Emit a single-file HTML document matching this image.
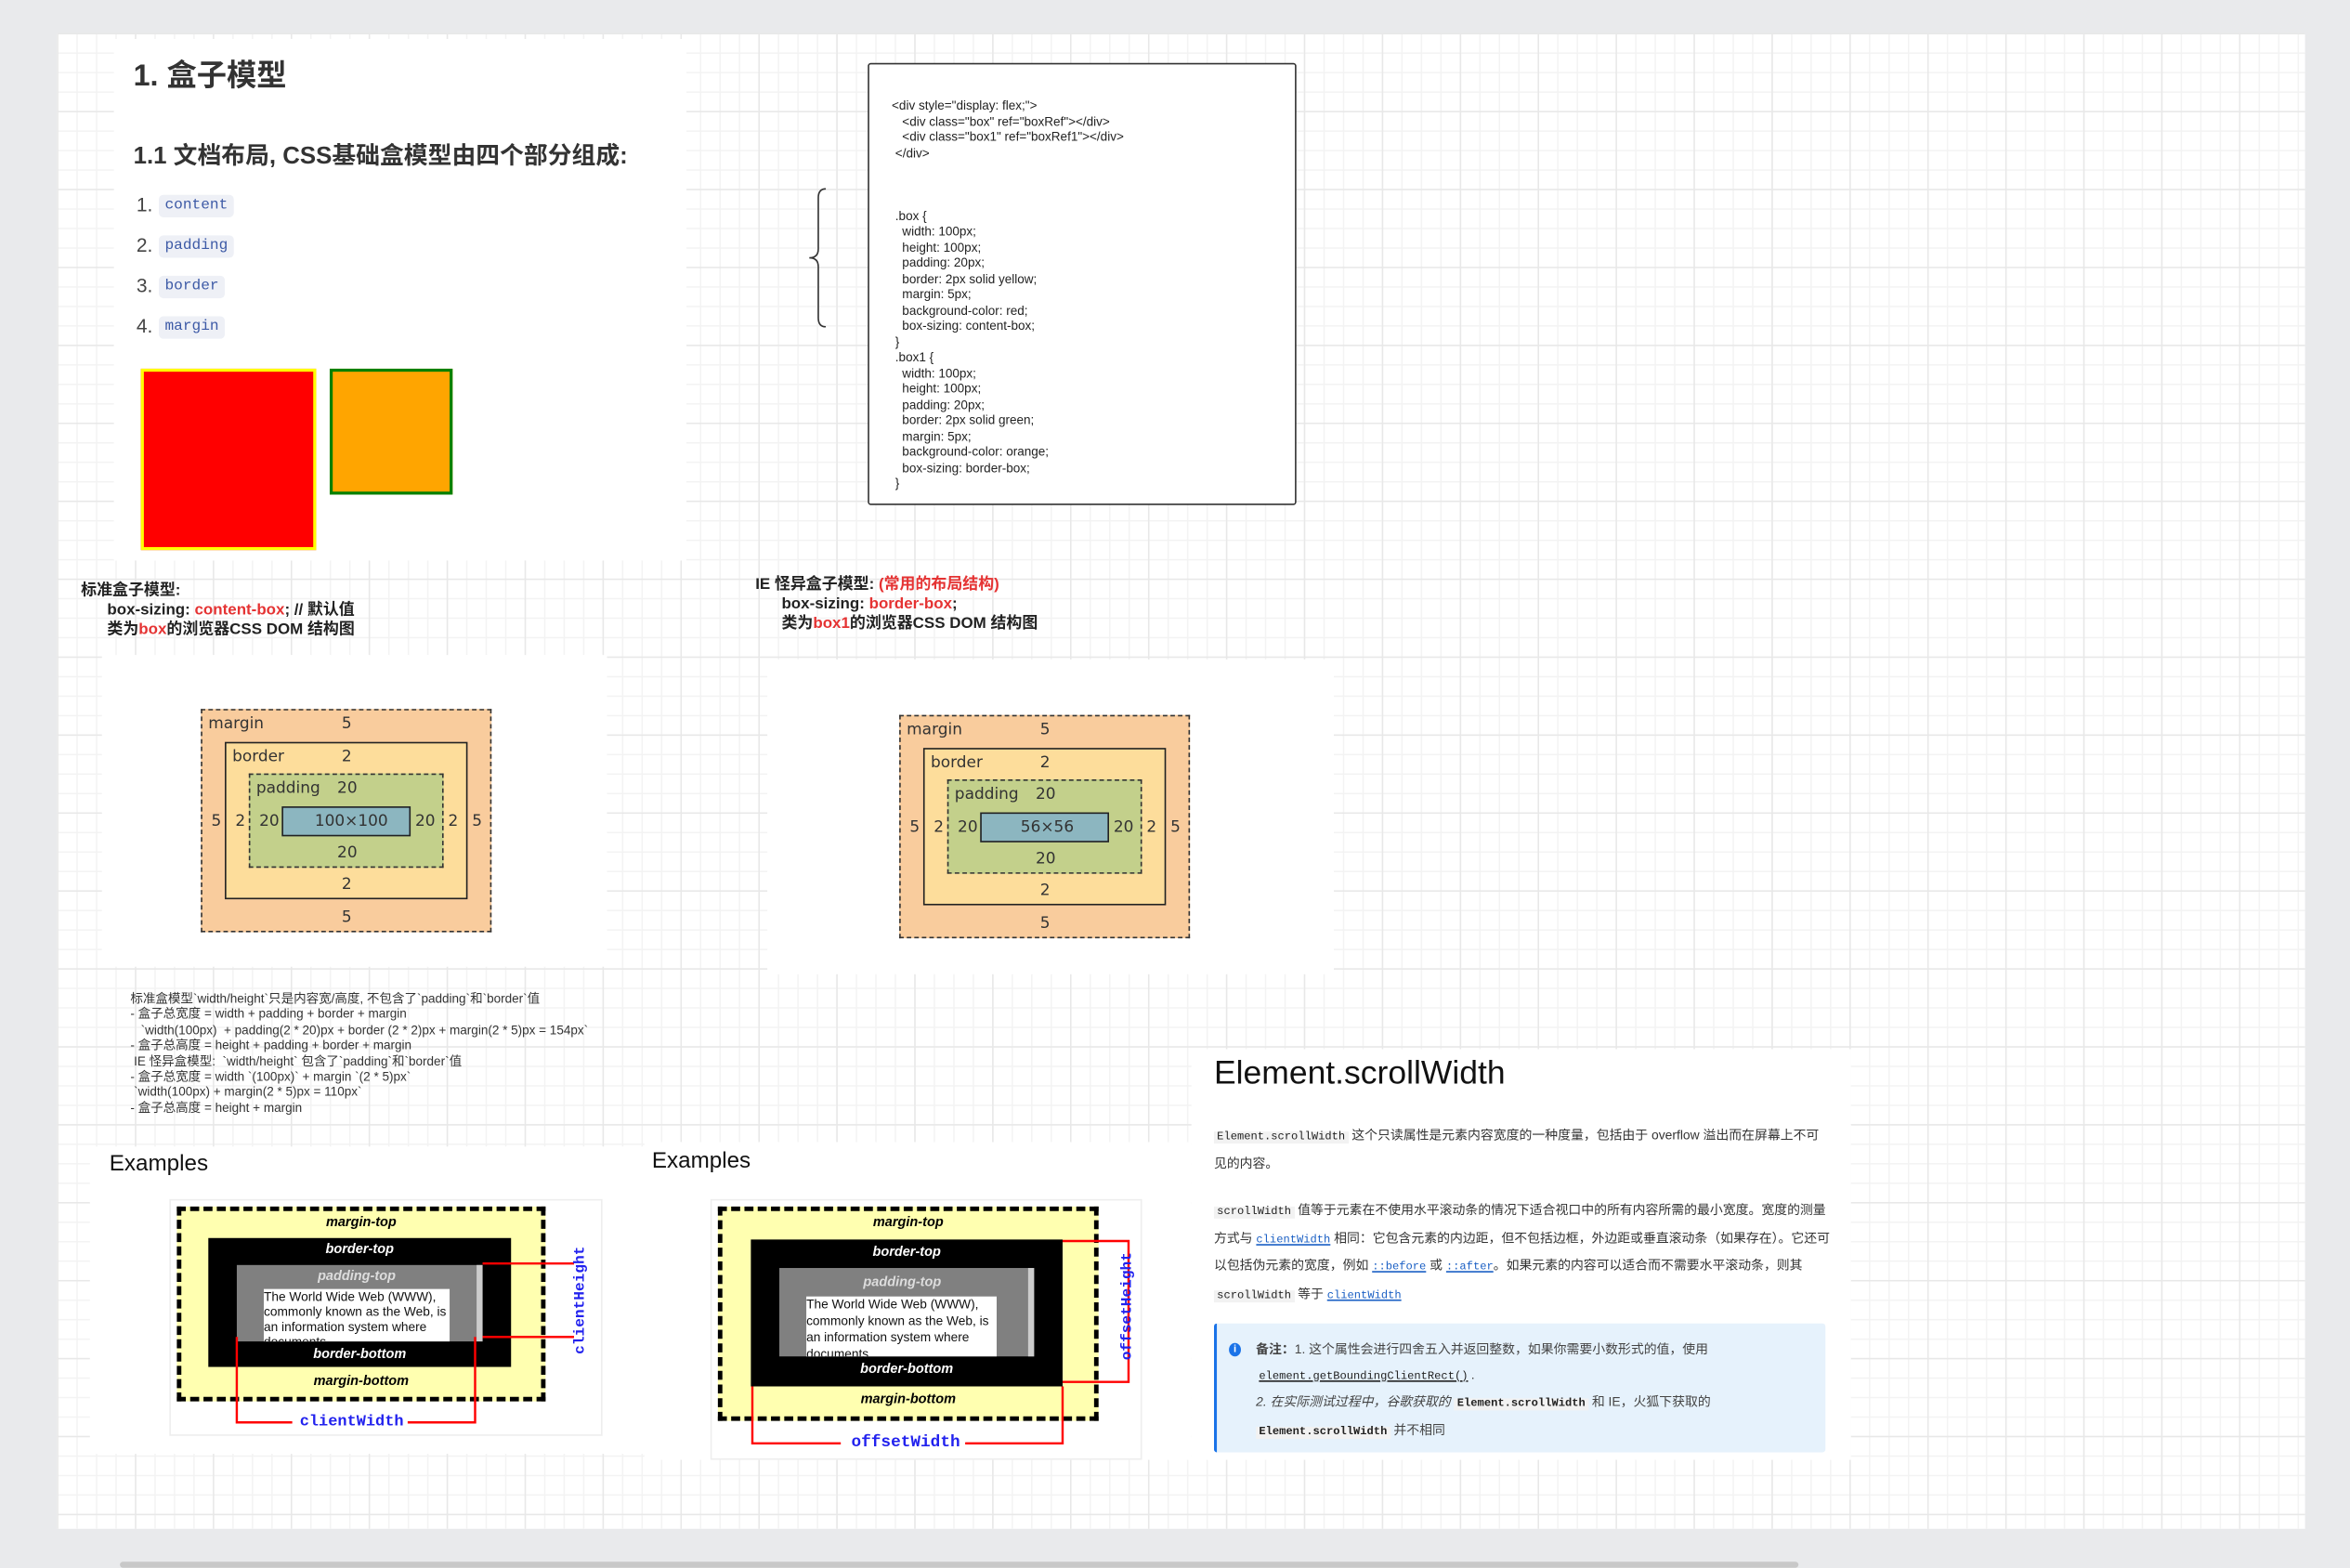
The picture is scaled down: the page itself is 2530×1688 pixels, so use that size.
<!DOCTYPE html>
<html><head><meta charset="utf-8">
<style>
html,body{margin:0;padding:0;}
body{width:2530px;height:1687px;overflow:hidden;background:#e9eaec;font-family:"Liberation Sans","Noto Sans CJK SC",sans-serif;}
#s{position:absolute;left:0;top:0;width:1568px;height:1046px;transform:scale(1.61352);transform-origin:0 0;}
.a{position:absolute;}
.cv{left:38px;top:22px;width:1500px;height:998px;background-color:#fff;
background-image:linear-gradient(#e8e8e8 1px,transparent 1px),linear-gradient(90deg,#e8e8e8 1px,transparent 1px),linear-gradient(#f3f3f3 1px,transparent 1px),linear-gradient(90deg,#f3f3f3 1px,transparent 1px);
background-size:52px 52px,52px 52px,13px 13px,13px 13px;}
.w{background:#fff;}
.code{font-family:"Liberation Mono",monospace;font-size:10px;color:#3d5aa6;background:#eef0f6;border-radius:3px;padding:2px 4px;}
.li{font-size:13px;color:#444;}
.cb{font-size:8.4px;line-height:10.5px;color:#222;white-space:pre;}
.lb{font-size:10.5px;font-weight:bold;color:#222;line-height:13px;white-space:pre;}
.r{color:#e53333;}
.n{font-size:8.4px;line-height:10.4px;color:#333;white-space:pre;}
.d{font-family:"DejaVu Sans","Liberation Sans",sans-serif;font-size:10.5px;color:#333;}
.ex{font-size:15px;color:#111;}
.it{font-style:italic;font-weight:bold;font-size:9px;text-align:center;}
.p{font-size:8.6px;color:#333;line-height:16.5px;}
.m{font-family:"Liberation Mono",monospace;font-size:7.5px;background:#f2f2f2;padding:0 2px;color:#222;}
.lk{font-family:"Liberation Mono",monospace;font-size:7.5px;color:#1a5fc4;text-decoration:underline;}
</style></head><body><div id="s">
<div class="a cv"></div>
<div class="a" style="left:80px;top:1042px;width:1120px;height:4px;background:#c8c8c8;border-radius:2px"></div>

<div class="a w" style="left:76px;top:26px;width:382px;height:348px"></div>
<div class="a" style="left:89px;top:34px;font-size:20px;font-weight:bold;color:#333">1. 盒子模型</div>
<div class="a" style="left:89px;top:90px;font-size:16px;font-weight:bold;color:#333">1.1 文档布局, CSS基础盒模型由四个部分组成:</div>
<div class="a li" style="left:91px;top:129px">1.</div><div class="a code" style="left:106px;top:130px">content</div>
<div class="a li" style="left:91px;top:156px">2.</div><div class="a code" style="left:106px;top:157px">padding</div>
<div class="a li" style="left:91px;top:183px">3.</div><div class="a code" style="left:106px;top:184px">border</div>
<div class="a li" style="left:91px;top:210px">4.</div><div class="a code" style="left:106px;top:211px">margin</div>
<div class="a" style="left:94px;top:246px;width:113px;height:117px;background:#f00;border:2px solid #ff0"></div>
<div class="a" style="left:220px;top:246px;width:78px;height:80px;background:#ffa500;border:2px solid #008000"></div>

<div class="a" style="left:579px;top:42px;width:284px;height:293px;background:#fff;border:1.3px solid #333;border-radius:2px"></div>
<div class="a cb" style="left:595px;top:65px">&lt;div style="display: flex;"&gt;
   &lt;div class="box" ref="boxRef"&gt;&lt;/div&gt;
   &lt;div class="box1" ref="boxRef1"&gt;&lt;/div&gt;
 &lt;/div&gt;



 .box {
   width: 100px;
   height: 100px;
   padding: 20px;
   border: 2px solid yellow;
   margin: 5px;
   background-color: red;
   box-sizing: content-box;
 }
 .box1 {
   width: 100px;
   height: 100px;
   padding: 20px;
   border: 2px solid green;
   margin: 5px;
   background-color: orange;
   box-sizing: border-box;
 }</div>
<svg class="a" style="left:536px;top:124px" width="22" height="96"><path d="M15 2 Q10 2 10 8 L10 42 Q10 48 4 48 Q10 48 10 54 L10 88 Q10 94 15 94" fill="none" stroke="#333" stroke-width="1"/></svg>

<div class="a lb" style="left:54px;top:388px">标准盒子模型:
      box-sizing: <span class="r">content-box</span>; // 默认值
      类为<span class="r">box</span>的浏览器CSS DOM 结构图</div>
<div class="a lb" style="left:504px;top:384px">IE 怪异盒子模型: <span class="r">(常用的布局结构)</span>
      box-sizing: <span class="r">border-box</span>;
      类为<span class="r">box1</span>的浏览器CSS DOM 结构图</div>

<div class="a w" style="left:68px;top:437px;width:337px;height:208px"></div>
<div class="a w" style="left:512px;top:440px;width:378px;height:210px"></div>

<div class="a" style="left:134px;top:473px">
 <div class="a" style="left:0;top:0;width:192px;height:147px;background:#f9cc9d;border:1px dashed #333"></div>
 <div class="a" style="left:16px;top:22px;width:160px;height:103px;background:#fddd9b;border:1px solid #222"></div>
 <div class="a" style="left:32px;top:43px;width:128px;height:61px;background:#c3d08b;border:1px dashed #333"></div>
 <div class="a" style="left:54px;top:65px;width:84px;height:18px;background:#8cb6c0;border:1px solid #222"></div>
 <div class="a d" style="left:5px;top:4px">margin</div><div class="a d" style="left:94px;top:4px">5</div>
 <div class="a d" style="left:21px;top:26px">border</div><div class="a d" style="left:94px;top:26px">2</div>
 <div class="a d" style="left:37px;top:47px">padding</div><div class="a d" style="left:91px;top:47px">20</div>
 <div class="a d" style="left:76px;top:69px">100×100</div>
 <div class="a d" style="left:7px;top:69px">5</div><div class="a d" style="left:23px;top:69px">2</div><div class="a d" style="left:39px;top:69px">20</div>
 <div class="a d" style="left:143px;top:69px">20</div><div class="a d" style="left:165px;top:69px">2</div><div class="a d" style="left:181px;top:69px">5</div>
 <div class="a d" style="left:91px;top:90px">20</div>
 <div class="a d" style="left:94px;top:111px">2</div>
 <div class="a d" style="left:94px;top:133px">5</div>
</div>
<div class="a" style="left:600px;top:477px">
 <div class="a" style="left:0;top:0;width:192px;height:147px;background:#f9cc9d;border:1px dashed #333"></div>
 <div class="a" style="left:16px;top:22px;width:160px;height:103px;background:#fddd9b;border:1px solid #222"></div>
 <div class="a" style="left:32px;top:43px;width:128px;height:61px;background:#c3d08b;border:1px dashed #333"></div>
 <div class="a" style="left:54px;top:65px;width:84px;height:18px;background:#8cb6c0;border:1px solid #222"></div>
 <div class="a d" style="left:5px;top:4px">margin</div><div class="a d" style="left:94px;top:4px">5</div>
 <div class="a d" style="left:21px;top:26px">border</div><div class="a d" style="left:94px;top:26px">2</div>
 <div class="a d" style="left:37px;top:47px">padding</div><div class="a d" style="left:91px;top:47px">20</div>
 <div class="a d" style="left:81px;top:69px">56×56</div>
 <div class="a d" style="left:7px;top:69px">5</div><div class="a d" style="left:23px;top:69px">2</div><div class="a d" style="left:39px;top:69px">20</div>
 <div class="a d" style="left:143px;top:69px">20</div><div class="a d" style="left:165px;top:69px">2</div><div class="a d" style="left:181px;top:69px">5</div>
 <div class="a d" style="left:91px;top:90px">20</div>
 <div class="a d" style="left:94px;top:111px">2</div>
 <div class="a d" style="left:94px;top:133px">5</div>
</div>

<div class="a n" style="left:87px;top:661px">标准盒模型`width/height`只是内容宽/高度, 不包含了`padding`和`border`值
- 盒子总宽度 = width + padding + border + margin
   `width(100px)  + padding(2 * 20)px + border (2 * 2)px + margin(2 * 5)px = 154px`
- 盒子总高度 = height + padding + border + margin
 IE 怪异盒模型:  `width/height` 包含了`padding`和`border`值
- 盒子总宽度 = width `(100px)` + margin `(2 * 5)px`
 `width(100px) + margin(2 * 5)px = 110px`
- 盒子总高度 = height + margin</div>

<div class="a w" style="left:60px;top:765px;width:372px;height:205px"></div>
<div class="a w" style="left:430px;top:762px;width:365px;height:212px"></div>
<div class="a ex" style="left:73px;top:768px">Examples</div>
<div class="a ex" style="left:435px;top:766px">Examples</div>

<div class="a" style="left:113px;top:800px;width:287px;height:156px;border:1px solid #eee;background:#fff"></div>
<div class="a" style="left:118px;top:805px;width:240px;height:124px;background:#ffffb0;border:3px dashed #000"></div>
<div class="a it" style="left:118px;top:810px;width:246px">margin-top</div>
<div class="a" style="left:139px;top:826px;width:202px;height:86px;background:#000"></div>
<div class="a it" style="left:139px;top:828px;width:202px;color:#fff">border-top</div>
<div class="a" style="left:158px;top:844px;width:164px;height:51px;background:#808080"></div>
<div class="a it" style="left:158px;top:846px;width:160px;color:#ddd">padding-top</div>
<div class="a" style="left:318px;top:844px;width:4px;height:51px;background:#ccc"></div>
<div class="a" style="left:176px;top:860px;width:124px;height:35px;background:#fff;overflow:hidden;font-size:8.5px;line-height:10px;color:#111">The World Wide Web (WWW), commonly known as the Web, is an information system where documents</div>
<div class="a it" style="left:139px;top:898px;width:202px;color:#fff">border-bottom</div>
<div class="a it" style="left:118px;top:916px;width:246px">margin-bottom</div>
<svg class="a" style="left:150px;top:835px" width="260" height="125"><path d="M172 8 H233 M172 57 H233 M8 57 V114 H45 M110 114 H167 V57" fill="none" stroke="#f00" stroke-width="1.5"/></svg>
<div class="a" style="left:197px;top:943px;padding:0 3px;background:#fff;font-family:'Liberation Mono',monospace;font-size:10.5px;font-weight:bold;color:#2222ee">clientWidth</div>
<div class="a" style="left:352px;top:862px;width:72px;transform:rotate(-90deg);font-family:'Liberation Mono',monospace;font-size:10px;font-weight:bold;color:#2222ee;text-align:center">clientHeight</div>

<div class="a" style="left:474px;top:800px;width:286px;height:172px;border:1px solid #eee;background:#fff"></div>
<div class="a" style="left:479px;top:805px;width:248px;height:137px;background:#ffffb0;border:3px dashed #000"></div>
<div class="a it" style="left:479px;top:810px;width:254px">margin-top</div>
<div class="a" style="left:501px;top:827px;width:208px;height:98px;background:#000"></div>
<div class="a it" style="left:501px;top:830px;width:208px;color:#fff">border-top</div>
<div class="a" style="left:520px;top:846px;width:170px;height:59px;background:#808080"></div>
<div class="a it" style="left:520px;top:850px;width:164px;color:#ddd">padding-top</div>
<div class="a" style="left:686px;top:846px;width:4px;height:59px;background:#ccc"></div>
<div class="a" style="left:538px;top:865px;width:127px;height:40px;background:#fff;overflow:hidden;font-size:8.5px;line-height:11px;color:#111">The World Wide Web (WWW), commonly known as the Web, is an information system where documents</div>
<div class="a it" style="left:501px;top:908px;width:208px;color:#fff">border-bottom</div>
<div class="a it" style="left:479px;top:928px;width:254px">margin-bottom</div>
<svg class="a" style="left:495px;top:820px" width="270" height="150"><path d="M214 8 H258 V102 H214 M7 105 V143 H66 M137 143 H214 V105" fill="none" stroke="#f00" stroke-width="1.5"/></svg>
<div class="a" style="left:565px;top:957px;padding:0 3px;background:#fff;font-family:'Liberation Mono',monospace;font-size:11px;font-weight:bold;color:#2222ee">offsetWidth</div>
<div class="a" style="left:711px;top:866px;width:80px;padding:0 2px;transform:rotate(-90deg);font-family:'Liberation Mono',monospace;font-size:10px;font-weight:bold;color:#2222ee;text-align:center">offsetHeight</div>

<div class="a w" style="left:795px;top:700px;width:440px;height:274px"></div>
<div class="a" style="left:810px;top:703px;font-size:22px;color:#111">Element.scrollWidth</div>
<div class="a p" style="left:810px;top:749px;width:410px"><span class="m">Element.scrollWidth</span> 这个只读属性是元素内容宽度的一种度量，包括由于 overflow 溢出而在屏幕上不可见的内容。</div>
<div class="a p" style="left:810px;top:799px;width:412px"><span class="m">scrollWidth</span> 值等于元素在不使用水平滚动条的情况下适合视口中的所有内容所需的最小宽度。宽度的测量方式与 <span class="lk">clientWidth</span> 相同：它包含元素的内边距，但不包括边框，外边距或垂直滚动条（如果存在）。它还可以包括伪元素的宽度，例如 <span class="lk">::before</span> 或 <span class="lk">::after</span>。如果元素的内容可以适合而不需要水平滚动条，则其 <span class="m">scrollWidth</span> 等于 <span class="lk">clientWidth</span></div>
<div class="a" style="left:810px;top:883px;width:406px;height:86px;background:#e6f2fc;border-left:2px solid #1a73e8;border-radius:2px"></div>
<div class="a" style="left:820px;top:896px;width:8px;height:9px;border-radius:50%;background:#1a73e8;color:#fff;font-size:7px;line-height:9px;text-align:center;font-weight:bold">i</div>
<div class="a p" style="left:838px;top:892px;width:370px;color:#444"><b>备注：</b>1. 这个属性会进行四舍五入并返回整数，如果你需要小数形式的值，使用<br><span class="m" style="text-decoration:underline;background:none">element.getBoundingClientRect()</span>.<br><i>2. 在实际测试过程中，谷歌获取的</i> <span class="m" style="font-weight:bold">Element.scrollWidth</span> 和 IE，火狐下获取的<br><span class="m" style="font-weight:bold">Element.scrollWidth</span> 并不相同</div>
</div></body></html>
